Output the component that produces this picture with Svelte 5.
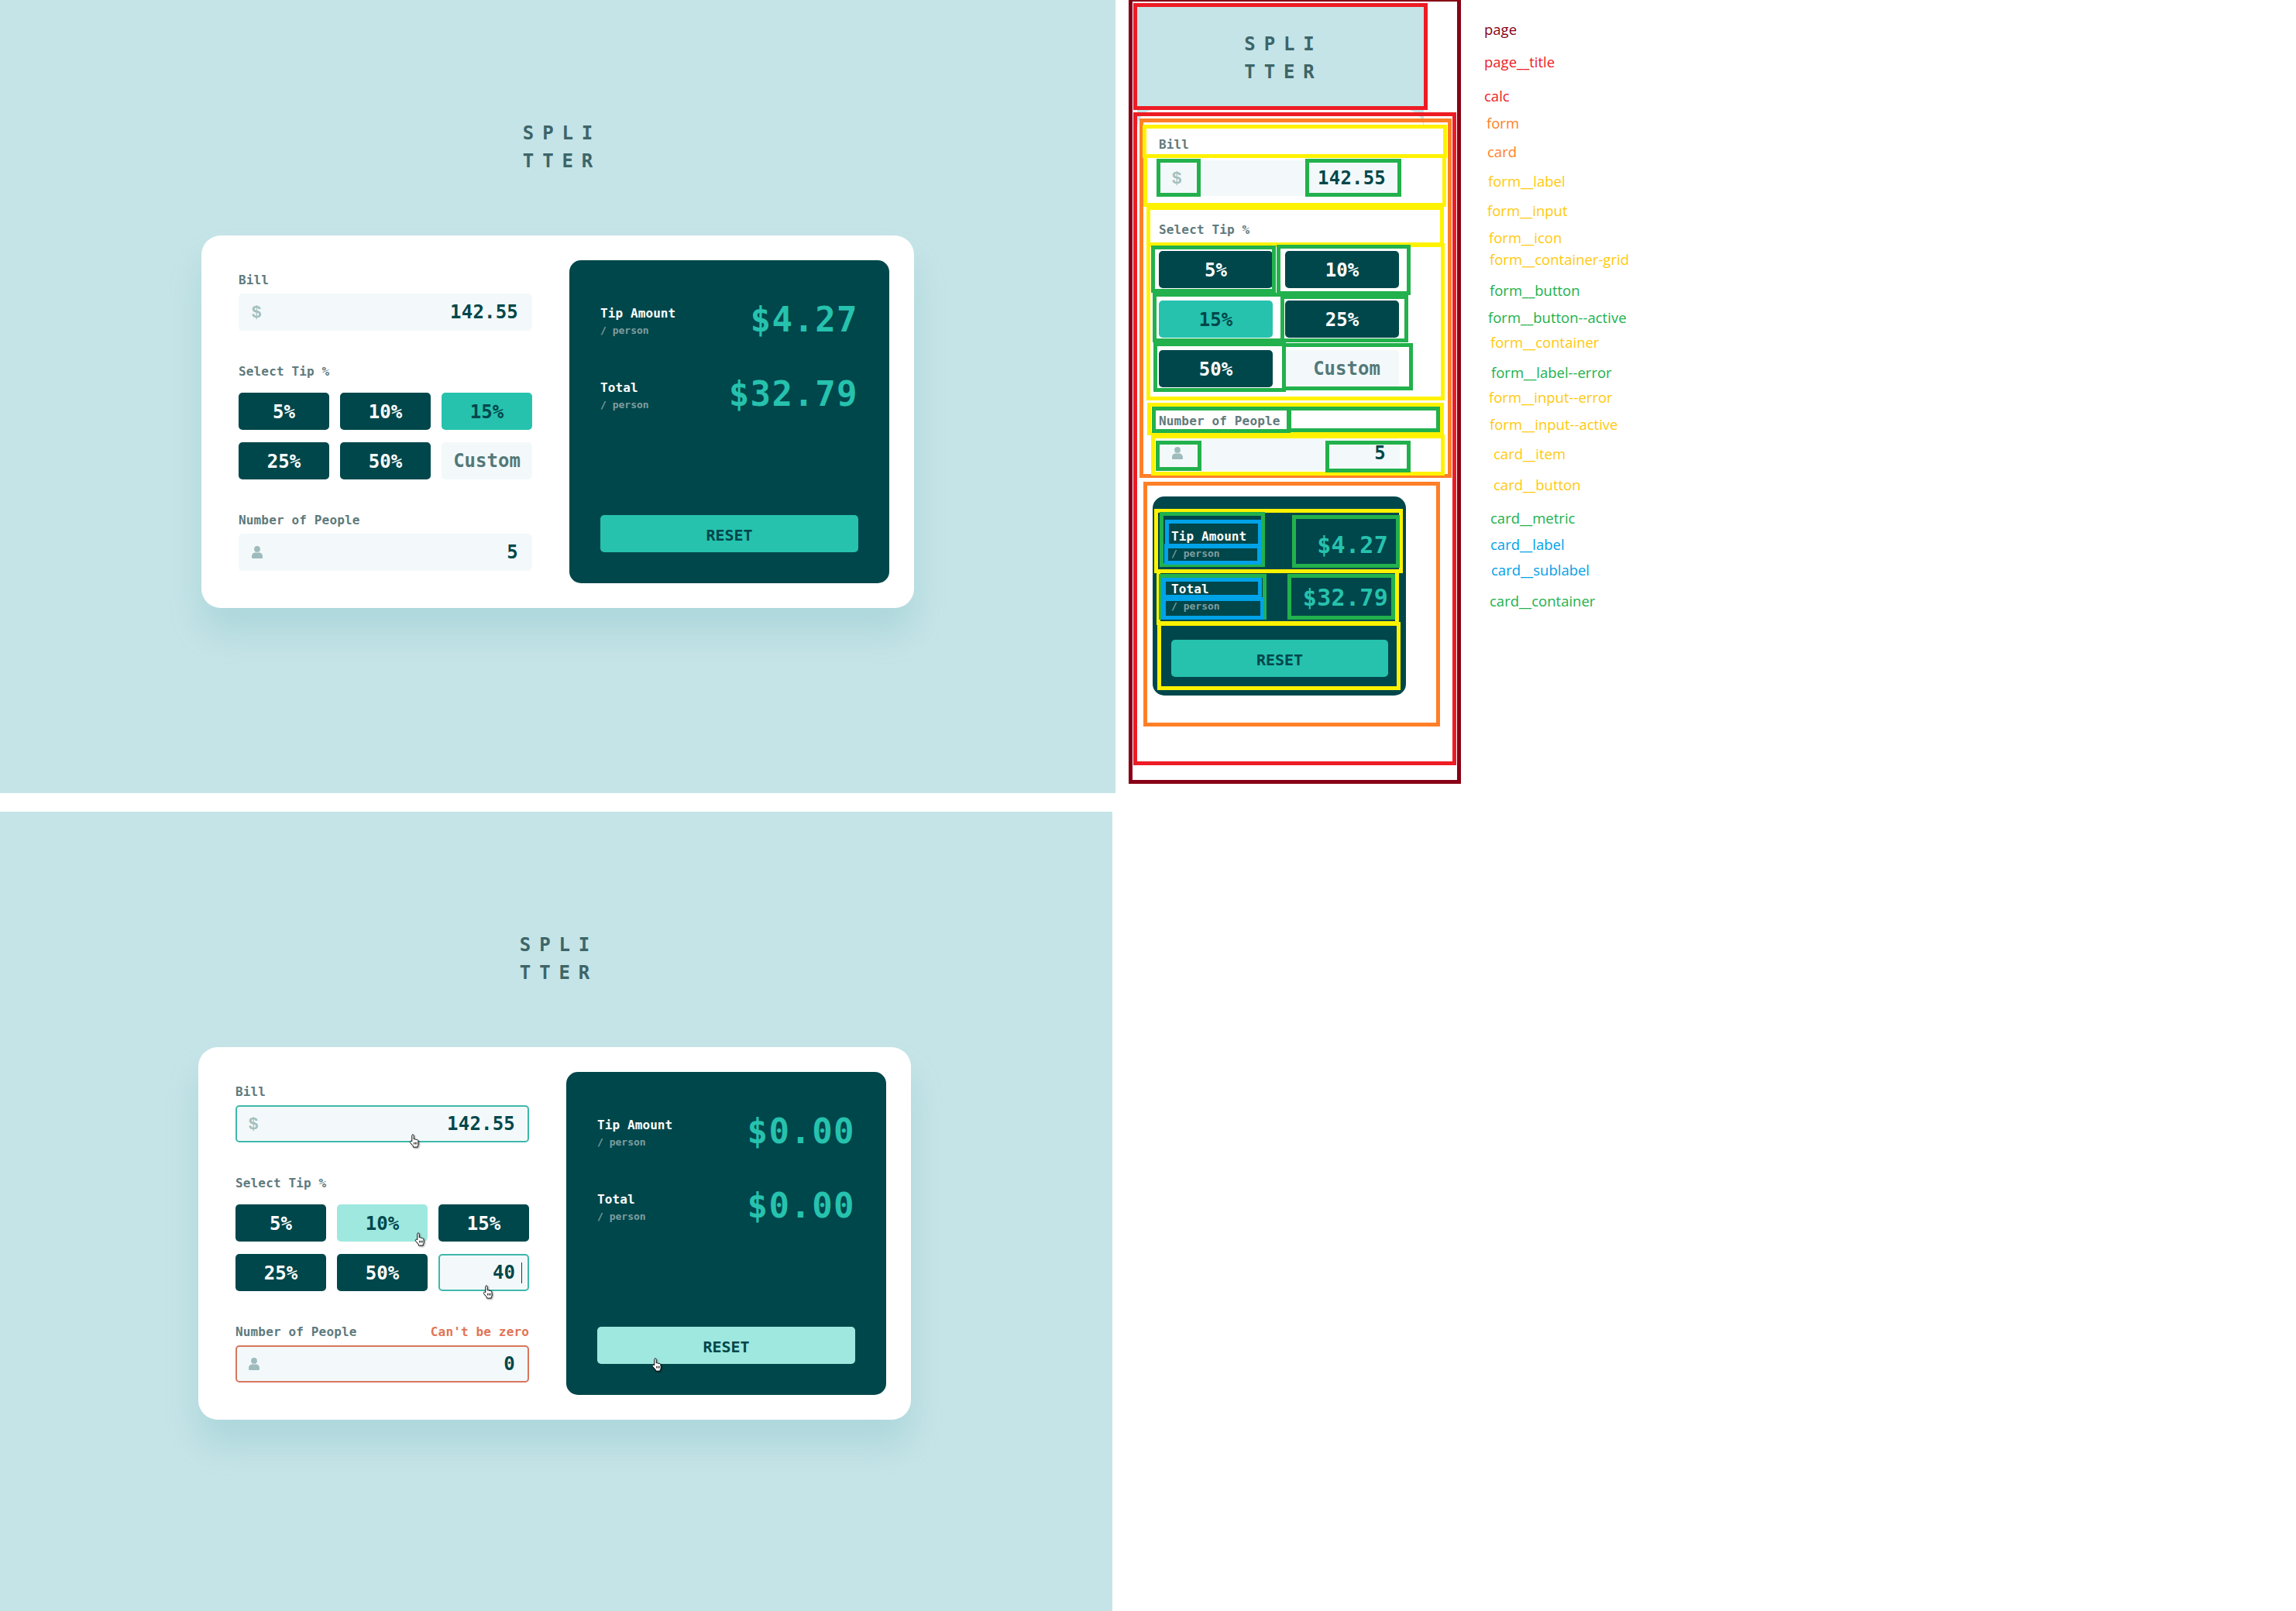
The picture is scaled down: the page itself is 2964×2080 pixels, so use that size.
<script>
  const tips = ["5%", "10%", "15%", "25%", "50%"];

  const normal = {
    billFocus: false,
    tipActive: "15%",
    tipHover: null,
    custom: "Custom",
    customFocus: false,
    people: "5",
    peopleError: false,
    tip: "$4.27",
    total: "$32.79",
    resetHover: false,
    hands: [],
    cls: "",
  };

  const states = {
    ...normal,
    billFocus: true,
    tipActive: null,
    tipHover: "10%",
    custom: "40",
    customFocus: true,
    people: "0",
    peopleError: true,
    tip: "$0.00",
    total: "$0.00",
    resetHover: true,
    hands: [
      [528, 416],
      [535, 543],
      [623, 611],
      [841, 705],
    ],
    cls: "shifted",
  };

  // annotation boxes drawn over the mobile mock, outer bounds relative to the canvas
  const C = {
    page: "#880015",
    red: "#ed1c24",
    orange: "#ff7f27",
    yellow: "#fff200",
    green: "#22b14c",
    blue: "#00a2e8",
  };
  const boxes = [
    [C.page, 17, -3, 446, 1012],
    [C.red, 23, 4, 403, 142],
    [C.red, 23, 145, 440, 988],
    [C.orange, 31, 153, 434, 617],
    [C.orange, 36, 622, 419, 938],
    [C.yellow, 35, 161, 428, 204],
    [C.yellow, 36, 199, 427, 267],
    [C.yellow, 40, 266, 424, 318],
    [C.yellow, 40, 314, 425, 517],
    [C.yellow, 41, 520, 424, 562],
    [C.yellow, 46, 561, 425, 614],
    [C.yellow, 50, 657, 371, 740],
    [C.yellow, 53, 735, 366, 807],
    [C.yellow, 54, 803, 368, 891],
    [C.green, 53, 205, 110, 254],
    [C.green, 245, 205, 369, 254],
    [C.green, 46, 317, 207, 378],
    [C.green, 208, 316, 381, 381],
    [C.green, 48, 378, 218, 442],
    [C.green, 213, 381, 378, 442],
    [C.green, 49, 442, 220, 506],
    [C.green, 215, 443, 384, 504],
    [C.green, 47, 525, 226, 559],
    [C.green, 222, 525, 419, 558],
    [C.green, 52, 569, 111, 608],
    [C.green, 271, 569, 381, 610],
    [C.green, 57, 661, 193, 732],
    [C.green, 228, 665, 367, 733],
    [C.green, 56, 741, 195, 800],
    [C.green, 222, 741, 361, 800],
    [C.blue, 64, 671, 189, 708],
    [C.blue, 63, 702, 188, 729],
    [C.blue, 60, 746, 189, 773],
    [C.blue, 60, 771, 192, 800],
  ];

  const legend = [
    ["page", C.page, 476, 37],
    ["page__title", C.red, 476, 79],
    ["calc", C.red, 476, 123],
    ["form", C.orange, 479, 158],
    ["card", C.orange, 480, 195],
    ["form__label", "#ffc90e", 481, 233],
    ["form__input", "#ffc90e", 480, 271],
    ["form__icon", "#ffc90e", 482, 306],
    ["form__container-grid", "#ffc90e", 483, 334],
    ["form__button", C.green, 483, 374],
    ["form__button--active", C.green, 481, 409],
    ["form__container", "#ffc90e", 484, 441],
    ["form__label--error", C.green, 485, 480],
    ["form__input--error", "#ffc90e", 482, 512],
    ["form__input--active", "#ffc90e", 483, 547],
    ["card__item", "#ffc90e", 488, 585],
    ["card__button", "#ffc90e", 488, 625],
    ["card__metric", C.green, 484, 668],
    ["card__label", C.blue, 484, 702],
    ["card__sublabel", C.blue, 485, 735],
    ["card__container", C.green, 483, 775],
  ];

  const mockTips = ["5%", "10%", "15%", "25%", "50%"];
</script>

{#snippet person()}
  <svg class="person" viewBox="0 0 14 16" aria-hidden="true">
    <circle cx="7" cy="3.9" r="3.9" />
    <path d="M0 13.5C0 10.5 2.2 8.6 4.6 8.6h4.8c2.4 0 4.6 1.9 4.6 4.9v.9c0 .9-.7 1.6-1.6 1.6H1.6C.7 16 0 15.3 0 14.4z" />
  </svg>
{/snippet}

{#snippet hand(x, y)}
  <svg class="hand" style="left:{x}px;top:{y}px" viewBox="0 0 16 20" aria-hidden="true">
    <path
      d="M5 1c.9 0 1.6.7 1.6 1.6v5l.6-.1c.7-.1 1.3.1 1.6.6.7-.3 1.5-.1 1.9.5.7-.3 1.7 0 2 .8l.6 3.8c.2 1.8-.4 3-1.2 4.2v1.6H5.7v-1.6L1.5 12.6c-.6-.8-.4-1.8.4-2.2.7-.4 1.4-.1 2 .5V2.6C3.9 1.7 4.2 1 5 1z"
      fill="#fff"
      stroke="#000"
      stroke-width="1"
    />
    <path d="M7 12v3M9 12v3M11 12v3" stroke="#000" stroke-width="1" fill="none" />
  </svg>
{/snippet}

{#snippet calc(s)}
  <section class="page {s.cls}">
    <div class="inner">
      <h1 class="title">SPLI<br />TTER</h1>
      <div class="calc">
        <form class="form" onsubmit={(e) => e.preventDefault()}>
          <div class="label-row"><span class="label">Bill</span></div>
          <div class="input" class:focus={s.billFocus}>
            <span class="dollar">$</span>
            <span class="value">142.55</span>
          </div>

          <div class="label-row spaced"><span class="label">Select Tip %</span></div>
          <div class="grid">
            {#each tips as t}
              <button
                type="button"
                class="tip"
                class:active={s.tipActive === t}
                class:hover={s.tipHover === t}>{t}</button
              >
            {/each}
            <div class="custom" class:focus={s.customFocus}>
              <span>{s.custom}</span>
              {#if s.customFocus}<i class="caret"></i>{/if}
            </div>
          </div>

          <div class="label-row spaced">
            <span class="label">Number of People</span>
            {#if s.peopleError}<span class="error">Can't be zero</span>{/if}
          </div>
          <div class="input" class:error-box={s.peopleError}>
            {@render person()}
            <span class="value">{s.people}</span>
          </div>
        </form>

        <div class="card">
          <div class="item">
            <div>
              <div class="card-label">Tip Amount</div>
              <div class="sublabel">/ person</div>
            </div>
            <div class="metric">{s.tip}</div>
          </div>
          <div class="item">
            <div>
              <div class="card-label">Total</div>
              <div class="sublabel">/ person</div>
            </div>
            <div class="metric">{s.total}</div>
          </div>
          <button type="button" class="reset" class:hover={s.resetHover}>RESET</button>
        </div>
      </div>
    </div>
    {#each s.hands as h}
      {@render hand(h[0], h[1])}
    {/each}
  </section>
{/snippet}

<div class="sheet">
  <div class="desktop">
    {@render calc(normal)}
    {@render calc(states)}
  </div>

  <div class="annotated">
    <div class="mock">
      <div class="mock-head">
        <h1 class="title">SPLI<br />TTER</h1>
      </div>
      <div class="mock-card">
        <div class="label-row"><span class="label">Bill</span></div>
        <div class="input m-bill">
          <span class="dollar">$</span>
          <span class="value">142.55</span>
        </div>
        <div class="label-row m-gap"><span class="label">Select Tip %</span></div>
        <div class="m-grid">
          {#each mockTips as t}
            <button type="button" class="tip" class:active={t === "15%"}>{t}</button>
          {/each}
          <div class="custom m-custom"><span>Custom</span></div>
        </div>
        <div class="label-row m-gap"><span class="label">Number of People</span></div>
        <div class="input m-people">
          {@render person()}
          <span class="value">5</span>
        </div>

        <div class="m-result">
          <div class="m-item">
            <div>
              <div class="card-label">Tip Amount</div>
              <div class="sublabel">/ person</div>
            </div>
            <div class="metric small">$4.27</div>
          </div>
          <div class="m-item second">
            <div>
              <div class="card-label">Total</div>
              <div class="sublabel">/ person</div>
            </div>
            <div class="metric small">$32.79</div>
          </div>
          <button type="button" class="reset m-reset">RESET</button>
        </div>
      </div>
    </div>

    {#each boxes as b}
      <div
        class="box"
        style="left:{b[1]}px;top:{b[2]}px;width:{b[3] - b[1]}px;height:{b[4] - b[2]}px;border-color:{b[0]}"
      ></div>
    {/each}

    {#each legend as l}
      <span class="legend" style="left:{l[2]}px;top:{l[3]}px;color:{l[1]}">{l[0]}</span>
    {/each}
  </div>
</div>

<style>
  :global(body) {
    margin: 0;
    background: #fff;
  }

  .sheet {
    display: flex;
    width: 2964px;
    height: 2080px;
    overflow: hidden;
    font-family: "DejaVu Sans Mono", "Liberation Mono", monospace;
    font-weight: 700;
  }

  .desktop {
    display: flex;
    flex-direction: column;
    gap: 24px;
    width: 1440px;
    flex: none;
  }

  .page {
    position: relative;
    width: 1440px;
    height: 1024px;
    background: #c5e4e7;
    overflow: hidden;
  }

  .page.shifted {
    width: 1436px;
    height: 1032px;
  }

  .page.shifted .inner {
    margin-left: -4px;
  }

  .inner {
    width: 1440px;
    padding-top: 154px;
  }

  .title {
    margin: 0;
    font-size: 24px;
    line-height: 36px;
    font-weight: 700;
    letter-spacing: 10.9px;
    color: #3d6568;
    text-align: center;
    padding-left: 11px;
  }

  .calc {
    display: flex;
    gap: 48px;
    box-sizing: border-box;
    width: 920px;
    height: 481px;
    margin: 78px auto 0;
    padding: 32px 32px 32px 48px;
    background: #fff;
    border-radius: 25px;
    box-shadow: 0 32px 43px rgba(79, 166, 175, 0.2);
  }

  .form {
    width: 379px;
    flex: none;
    padding-top: 14px;
  }

  .label-row {
    display: flex;
    justify-content: space-between;
    height: 24px;
    line-height: 24px;
    margin-bottom: 5px;
  }

  .label-row.spaced {
    margin-top: 41px;
  }

  .label {
    font-size: 16px;
    letter-spacing: 0.15px;
    color: #5e7a7d;
  }

  .error {
    font-size: 16px;
    letter-spacing: 0.15px;
    color: #e17457;
  }

  .input {
    display: flex;
    align-items: center;
    justify-content: space-between;
    box-sizing: border-box;
    height: 48px;
    padding: 0 16px 0 15px;
    background: #f3f9fa;
    border: 2px solid transparent;
    border-radius: 5px;
  }

  .input.focus,
  .custom.focus {
    border-color: #3fb8ab;
  }

  .input.error-box {
    border-color: #d8765d;
  }

  .dollar {
    font-family: "Liberation Sans", sans-serif;
    font-size: 22px;
    font-weight: 700;
    color: #a3bfc0;
  }

  .person {
    width: 14px;
    height: 16px;
    fill: #9ebbbd;
  }

  .value {
    font-size: 24px;
    letter-spacing: 0.2px;
    color: #00474b;
  }

  .grid {
    display: grid;
    grid-template-columns: repeat(3, 117px);
    grid-auto-rows: 48px;
    gap: 16px 14px;
    margin-top: 15px;
  }

  .tip {
    border: 0;
    padding: 1px 0 0;
    font: inherit;
    font-size: 24px;
    border-radius: 5px;
    background: #00474b;
    color: #fff;
  }

  .tip.active {
    background: #26c2ae;
    color: #00474b;
  }

  .tip.hover {
    background: #9fe8df;
    color: #00474b;
  }

  .custom {
    position: relative;
    display: flex;
    align-items: center;
    justify-content: center;
    box-sizing: border-box;
    font-size: 24px;
    color: #547878;
    background: #f3f9fa;
    border: 2px solid transparent;
    border-radius: 5px;
  }

  .custom.focus {
    justify-content: flex-end;
    padding-right: 16px;
    color: #00474b;
  }

  .m-custom {
    padding-left: 12px;
  }

  .caret {
    position: absolute;
    right: 7px;
    top: 9px;
    width: 1px;
    height: 27px;
    background: #00474b;
  }

  .card {
    display: flex;
    flex-direction: column;
    flex: 1;
    box-sizing: border-box;
    padding: 57px 40px 40px;
    background: #00474b;
    border-radius: 15px;
  }

  .item {
    display: flex;
    justify-content: space-between;
    height: 44px;
    margin-bottom: 52px;
  }

  .card-label {
    font-size: 16px;
    line-height: 24px;
    letter-spacing: 0.1px;
    color: #fff;
  }

  .sublabel {
    font-size: 13px;
    line-height: 20px;
    color: #7f9d9f;
  }

  .metric {
    font-size: 44px;
    line-height: 40px;
    letter-spacing: 1.4px;
    color: #26c2ae;
  }

  .reset {
    margin-top: auto;
    height: 48px;
    border: 0;
    padding: 3px 0 0;
    font: inherit;
    font-size: 20px;
    border-radius: 5px;
    background: #26c2ae;
    color: #00474b;
  }

  .reset.hover {
    background: #9fe8df;
  }

  .hand {
    position: absolute;
    width: 15px;
    height: 18px;
    filter: drop-shadow(1px 1px 1px rgba(0, 0, 0, 0.45));
  }

  .annotated {
    position: relative;
    flex: 1;
    height: 2080px;
  }

  .mock {
    width: 370px;
    margin: 9px 0 0 28px;
  }

  .mock-head {
    box-sizing: border-box;
    height: 160px;
    padding-top: 30px;
    background: #c5e4e7;
  }

  .mock-head .title {
    padding-left: 8px;
  }

  .mock-card {
    margin-top: -28px;
    padding: 34px 31px 0 28px;
    background: #fff;
    border-radius: 25px 25px 0 0;
  }

  .m-bill {
    height: 46px;
    margin-top: 8px;
  }

  .m-people {
    height: 42px;
    margin-top: 10px;
    padding-bottom: 4px;
  }

  .mock-card .label-row {
    margin-bottom: 0;
  }

  .mock-card .label-row.m-gap {
    margin-top: 32px;
  }

  .m-grid {
    display: grid;
    grid-template-columns: repeat(2, 147px);
    grid-auto-rows: 48px;
    gap: 16px;
    margin-top: 15px;
  }

  .m-result {
    display: flex;
    flex-direction: column;
    box-sizing: border-box;
    width: 327px;
    height: 257px;
    margin: 33px 0 0 -8px;
    padding: 40px 23px 24px 24px;
    background: #00474b;
    border-radius: 15px;
  }

  .m-item {
    display: flex;
    justify-content: space-between;
    height: 44px;
    margin-bottom: 24px;
  }

  .metric.small {
    font-size: 30px;
    line-height: 30px;
    letter-spacing: 0.3px;
    padding-top: 8px;
  }

  .m-reset {
    flex: none;
  }

  .box {
    position: absolute;
    box-sizing: border-box;
    border: 5px solid;
  }

  .legend {
    position: absolute;
    transform: translateY(-50%);
    font-family: "Open Sans", sans-serif;
    font-size: 18.5px;
    font-weight: 400;
    white-space: nowrap;
  }
</style>
